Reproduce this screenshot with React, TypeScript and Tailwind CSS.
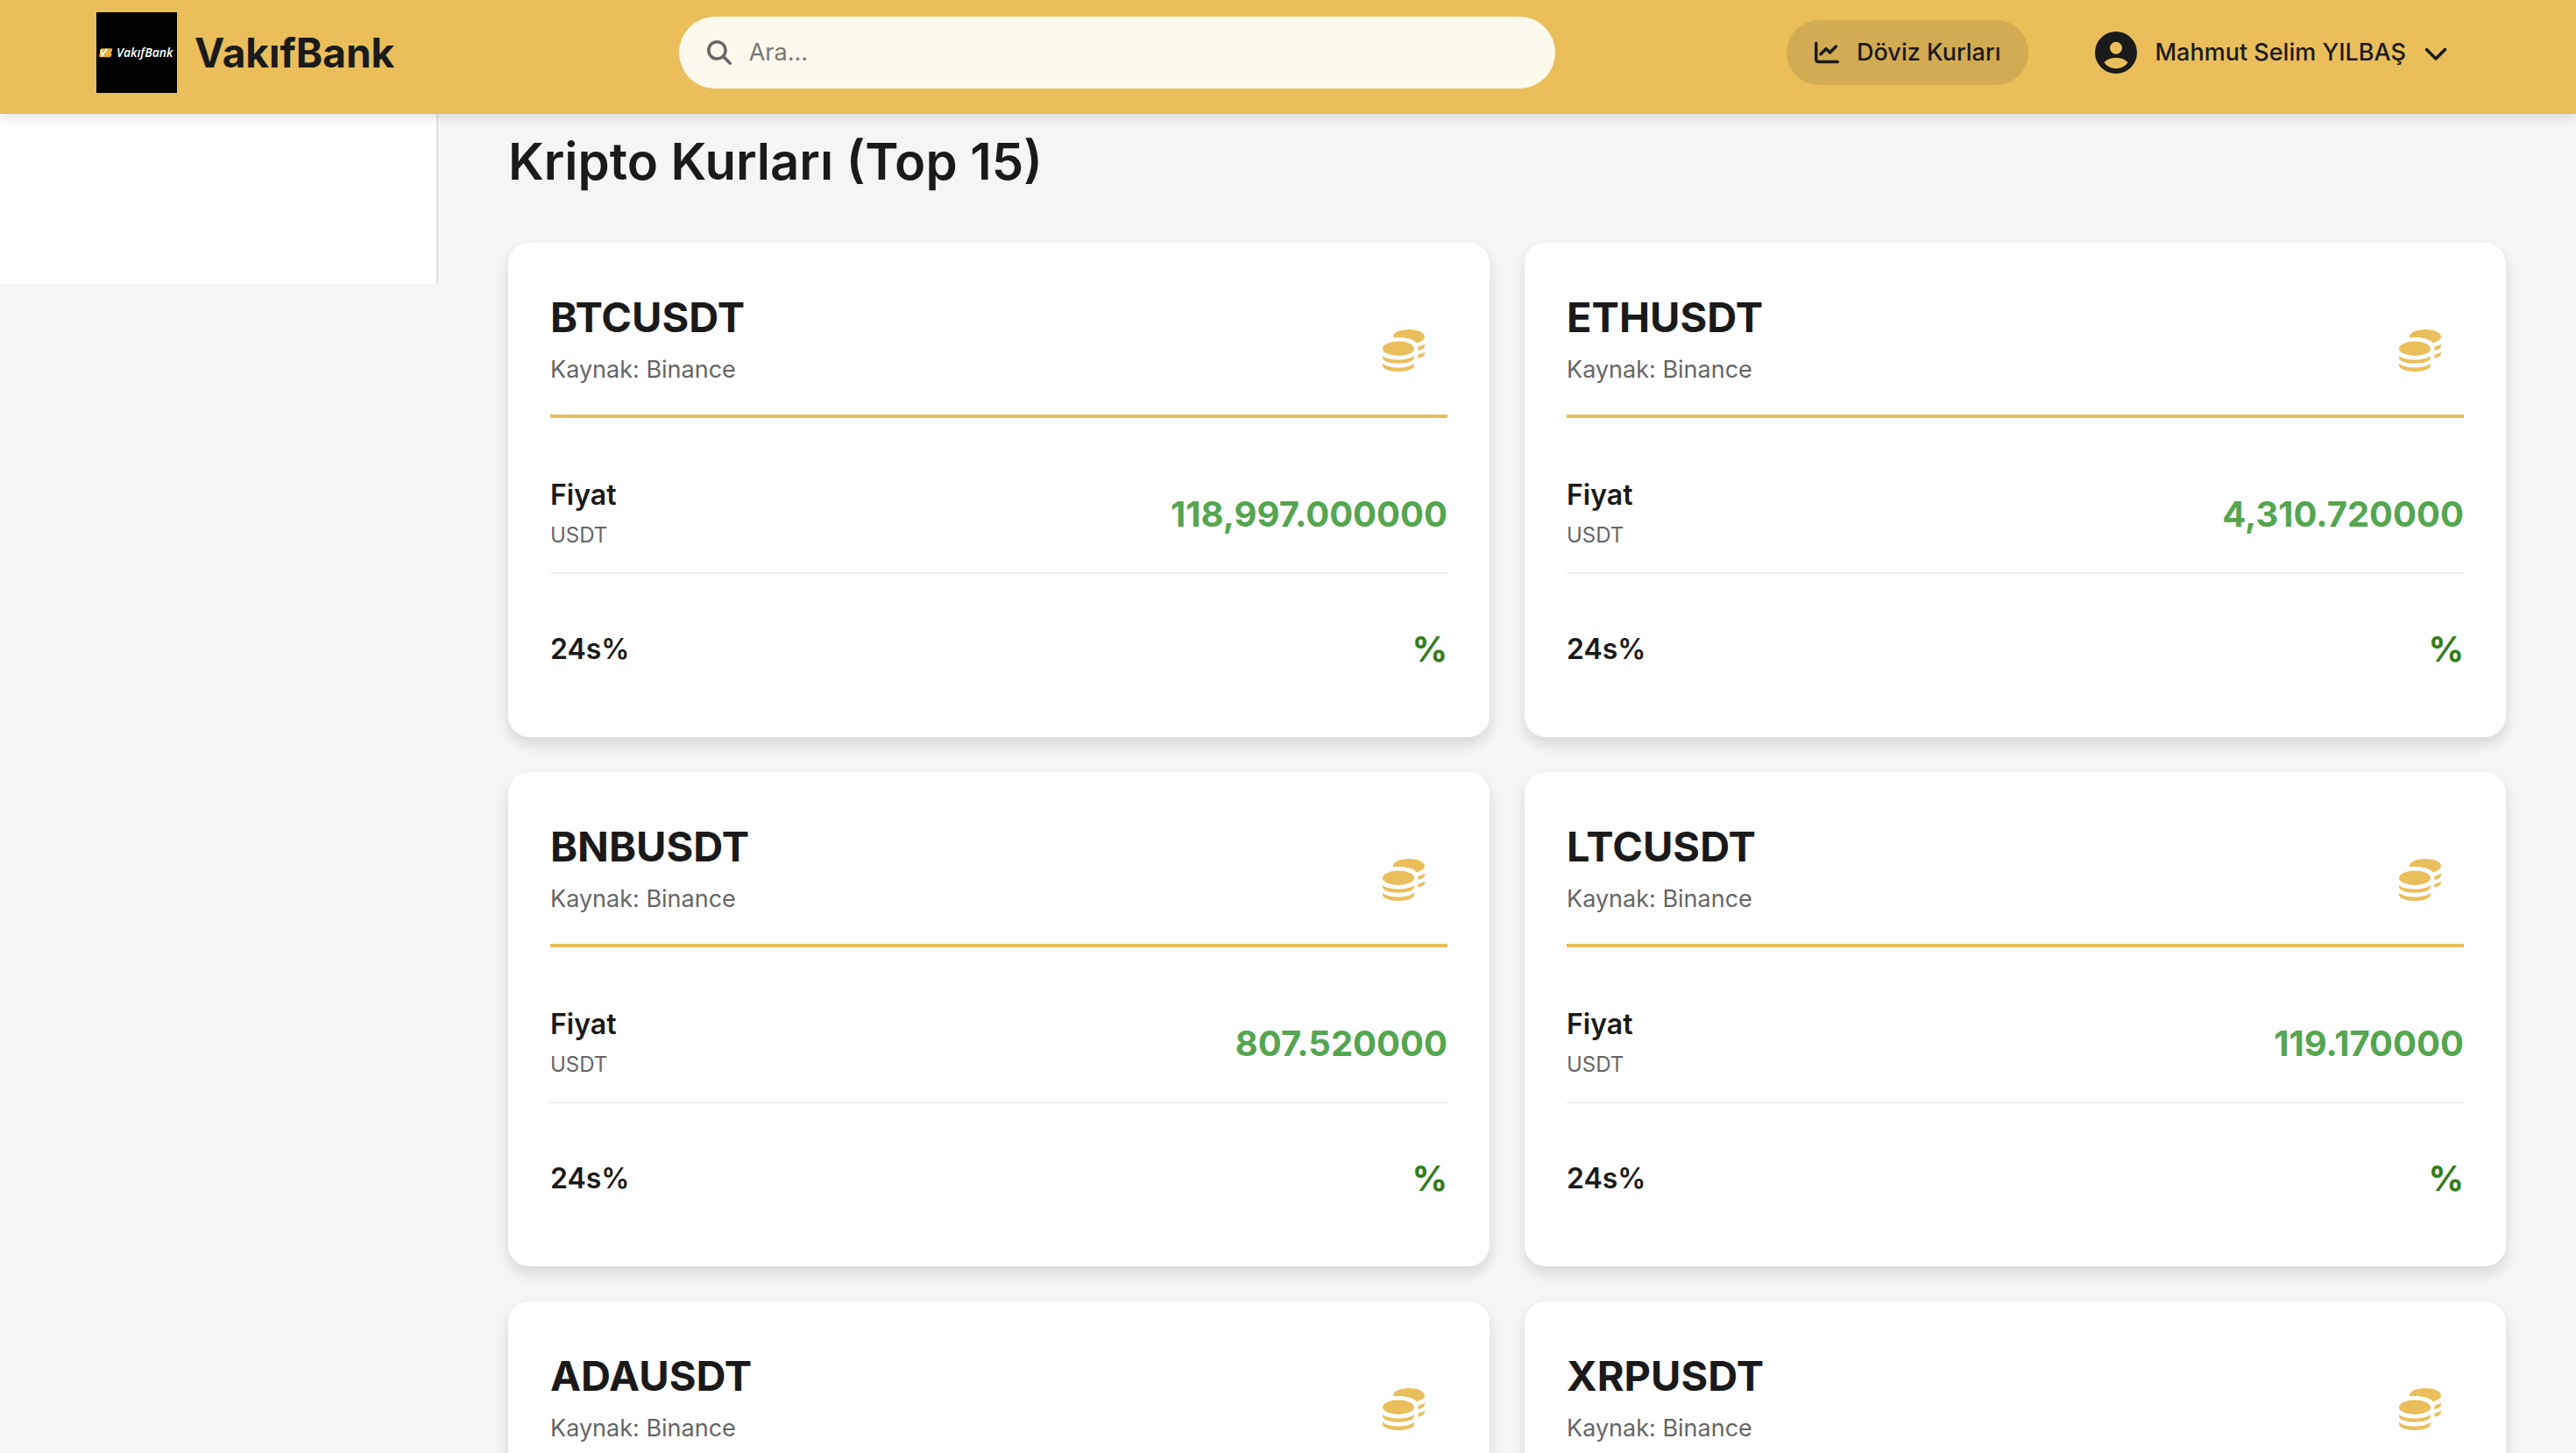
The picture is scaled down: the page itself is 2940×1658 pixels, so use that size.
import React from 'react';
import { FaChartLine, FaChevronDown, FaMagnifyingGlass } from 'react-icons/fa6';

const coins = [
  { symbol: 'BTCUSDT', price: '118,997.000000' },
  { symbol: 'ETHUSDT', price: '4,310.720000' },
  { symbol: 'BNBUSDT', price: '807.520000' },
  { symbol: 'LTCUSDT', price: '119.170000' },
  { symbol: 'ADAUSDT', price: '0.792500' },
  { symbol: 'XRPUSDT', price: '3.148700' },
];

function BrandMark() {
  return (
    <svg viewBox="0 0 92 92" className="size-[92px]" role="img" aria-label="VakıfBank logo">
      <rect width="92" height="92" fill="#000" />
      <path d="M6.500 41.300h10.500q1.800 0 1.300 2 -.4 1.600-1.800 2.600 1.500 .8 1 2.800 -.6 2.600-3 2.600H4.500q-1.700 0-1.300-1.800l1.500-6.500q.4-1.700 1.800-1.700z" fill="#eaae3c" />
      <path d="M5 42.300l1.700 7 5.300-7.500" fill="none" stroke="#fff" strokeWidth="1.700" />
      <text x="23" y="51" fontSize="14" fontWeight="600" fontStyle="italic" fill="#fff" fontFamily="Open Sans, sans-serif">VakıfBank</text>
    </svg>
  );
}

function AccountIcon() {
  return (
    <svg viewBox="0 0 48 48" className="size-12" fill="currentColor" aria-hidden="true">
      <path
        fillRule="evenodd"
        d="M24 0a24 24 0 1 1 0 48 24 24 0 0 1 0-48zM24 11.700a7 7 0 1 0 0 14 7 7 0 0 0 0-14zM10.500 35.500C14 40 18.500 42.200 24 42.200S34 40 37.500 35.500C34.500 31.500 29.500 30 24 30S13.500 31.500 10.500 35.500z"
      />
    </svg>
  );
}

function CoinsIcon() {
  return (
    <svg viewBox="0 0 48 48" className="mr-[26px] mb-[21px] size-12 text-[#eabe5b]" fill="currentColor" aria-hidden="true">
      <ellipse cx="18" cy="21.700" rx="18" ry="8.200" />
      <path d="M0 30.300C3.500 33 10 34.500 18 34.500S32.500 33 36 30.300V32C36 36 28 38.700 18 38.700S0 36 0 32z" />
      <path d="M0 38.700C3.500 41.800 10 43.500 18 43.500S32.500 41.800 36 38.700V41C36 45 28 48 18 48S0 45 0 41z" />
      <path d="M12 8C12 3.600 20 0 30 0s18 3.600 18 8c0 3.300-3.800 6-9.500 7.300C35.500 11.200 27.500 9 18 9q-3 0-6 .3z" />
      <path d="M40.500 19.600C44 18.900 46.500 17.900 48 16.800V18.500C48 20.800 45.500 22.800 40.500 24.300z" />
      <path d="M40.500 28.500C44 27.800 46.500 26.700 48 25.500V27.300C48 29.600 45.500 31.600 40.500 33z" />
    </svg>
  );
}

function CoinCard({ symbol, price }: { symbol: string; price: string }) {
  return (
    <article className="rounded-3xl bg-white p-12 shadow-[0_8px_16px_rgba(0,0,0,0.12)]">
      <header className="flex items-end justify-between border-b-4 border-[#eabe5b] pb-7">
        <div>
          <h2 className="text-[47px] leading-[73px] font-bold">{symbol}</h2>
          <p className="text-[27px] leading-[47px] text-[#666]">Kaynak: Binance</p>
        </div>
        <CoinsIcon />
      </header>
      <dl className="pt-10">
        <div className="flex items-center justify-between border-b-2 border-[#f0f0f0] pt-6 pb-5">
          <dt>
            <span className="block text-[32px] leading-12 font-semibold">Fiyat</span>
            <span className="block text-2xl leading-11 text-[#666]">USDT</span>
          </dt>
          <dd className="text-[40px] leading-15 font-bold text-[#54a650]">{price}</dd>
        </div>
        <div className="flex items-center justify-between pt-14 pb-[22px]">
          <dt className="text-[32px] leading-12 font-semibold">24s%</dt>
          <dd className="text-[40px] leading-15 font-bold text-[#327d21]">%</dd>
        </div>
      </dl>
    </article>
  );
}

export default function App() {
  return (
    <div className="flex h-screen flex-col overflow-hidden bg-[#f5f5f5] font-['Inter',sans-serif] text-[#1a1a1a]">
      <header className="z-10 flex shrink-0 items-center justify-between bg-[#e9be5b] pt-3.5 pr-[146px] pb-6 pl-[110px] shadow-[0_4px_12px_rgba(0,0,0,0.12)]">
        <a href="#" className="flex shrink-0 items-center gap-5 pr-15">
          <BrandMark />
          <span className="text-[46px] font-bold">VakıfBank</span>
        </a>
        <label className="flex h-[82px] w-full max-w-[1000px] items-center gap-5 rounded-full bg-[#fef9ed] px-8 text-[#666]">
          <FaMagnifyingGlass className="size-7 shrink-0" aria-hidden="true" />
          <input type="search" aria-label="Ara" placeholder="Ara..." className="w-full bg-transparent text-[27px] outline-none placeholder:text-[#767672]" />
        </label>
        <nav className="flex shrink-0 items-center gap-[76px] text-[27px] font-medium">
          <button className="flex h-[74px] items-center gap-5 rounded-full bg-[#d3ab52] px-8">
            <FaChartLine className="size-7" aria-hidden="true" />
            Döviz Kurları
          </button>
          <button className="flex items-center gap-5">
            <AccountIcon />
            Mahmut Selim YILBAŞ
            <FaChevronDown className="size-7" aria-hidden="true" />
          </button>
        </nav>
      </header>
      <div className="flex min-h-0 flex-1 items-start">
        <aside className="h-[194px] w-[500px] shrink-0 border-r-2 border-[#e0e0e0] bg-white" />
        <main className="flex-1 px-20 pt-3">
          <h1 className="mb-[51px] text-[58px] leading-[84px] font-semibold">Kripto Kurları (Top 15)</h1>
          <div className="grid grid-cols-2 gap-10">
            {coins.map((coin) => <CoinCard key={coin.symbol} {...coin} />)}
          </div>
        </main>
      </div>
    </div>
  );
}
